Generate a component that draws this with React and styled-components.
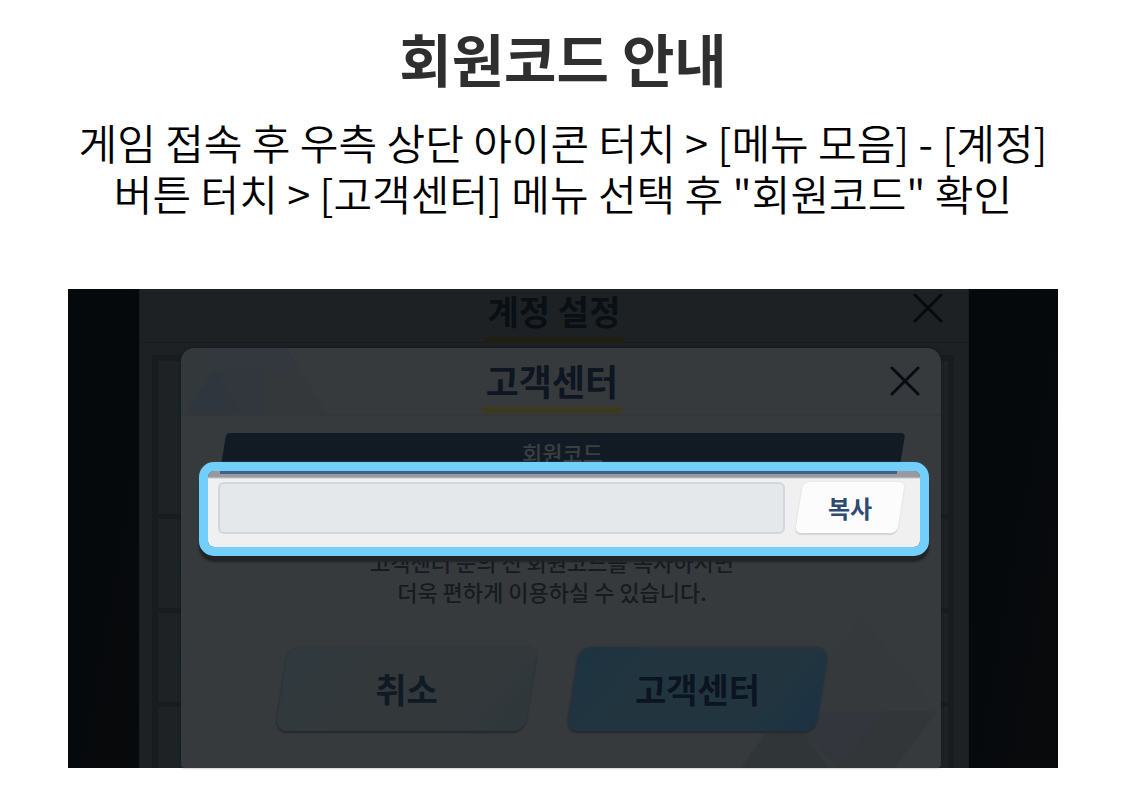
import React from "react";
import styled, { createGlobalStyle } from "styled-components";

const GlobalStyle = createGlobalStyle`
  *, *::before, *::after { box-sizing: border-box; }
  body {
    margin: 0;
    background: #fff;
    color: #000;
    font-family: "Noto Sans CJK KR", "Noto Sans", sans-serif;
  }
  h1, h2, h3, p, figure { margin: 0; }
  button, input { font: inherit; }
`;

const Page = styled.main`
  max-width: 1125px;
  margin: 0 auto;
  padding: 22px 67px 35px 68px;
  text-align: center;
`;

const Title = styled.h1`
  font-size: 57px;
  line-height: 70px;
  font-weight: 700;
  color: #2f2f2f;
`;

const Lead = styled.p`
  margin-top: 24px;
  font-size: 42px;
  line-height: 51px;
  font-weight: 350;
  word-break: keep-all;
`;

const Shot = styled.figure`
  display: grid;
  grid-template-columns: 71px 42px minmax(0, 1fr) 28px 89px;
  margin-top: 71px;
  background: linear-gradient(100deg, #05090c 0%, #07090b 12%, #04080b 50%, #05090c 88%, #090a0c 100%);
`;

const AccountPanel = styled.section`
  grid-area: 1 / 2 / 2 / 5;
  display: flex;
  flex-direction: column;
  min-height: 0;
  background: #1e2124;
  border: solid #191c1f;
  border-width: 0 1px;
`;

const PanelHeader = styled.header`
  position: relative;
  display: grid;
  grid-template-columns: 1fr auto 1fr;
  align-items: end;
  height: ${(p) => (p.$front ? 68 : 54)}px;
  padding: ${(p) => (p.$front ? "0 21px 1px 3px" : "0 25px 0 25px")};
  background: ${(p) => (p.$front ? "transparent" : "#1d2123")};
  border-bottom: ${(p) => (p.$front ? "2px solid #35363a" : "1px solid #1b1b1f")};
`;

const PanelTitle = styled.h2`
  grid-column: 2;
  padding: 0 4px 4px;
  font-size: ${(p) => (p.$front ? 36 : 34)}px;
  line-height: ${(p) => (p.$front ? 46 : 44)}px;
  font-weight: 700;
  color: ${(p) => (p.$front ? "#0e1621" : "#0a0f15")};
  border-bottom: 6px solid ${(p) => (p.$front ? "#3b3a1c" : "#1f1f13")};
`;

const CloseButton = styled.button`
  justify-self: end;
  align-self: ${(p) => (p.$front ? "center" : "start")};
  margin-top: ${(p) => (p.$front ? 0 : 4)}px;
  width: 30px;
  height: 30px;
  padding: 0;
  border: 0;
  background: none;
  color: ${(p) => (p.$front ? "#080c12" : "#07090c")};
  svg { display: block; }
`;

const SettingList = styled.div`
  flex: 1;
  display: flex;
  flex-direction: column;
  gap: 5px;
  margin: 12px 14px 0 12px;
  padding: 6px 6px 0;
  background: #1a1b1f;
`;

const SettingRow = styled.div`
  flex: ${(p) => (p.$tall ? "0 0 153px" : "0 0 89px")};
  padding: 34px 0 0 21px;
  background: #1e2224;
  &::before {
    content: "";
    display: block;
    width: 8px;
    height: 23px;
    background: #12242e;
  }
`;

const AccountBody = styled.div`
  flex: 1 1 0;
  min-height: 0;
  display: flex;
  overflow: hidden;
`;

const Dialog = styled.section`
  grid-area: 1 / 3;
  position: relative;
  margin-top: 59px;
  padding-bottom: 37px;
  border-radius: 14px 14px 4px 4px;
  background: #373a3c;
  box-shadow: 0 -1px 3px #17191b;
  overflow: hidden;
`;

const Facets = styled.svg`
  position: absolute;
  ${(p) => (p.$corner === "top" ? "top: 0; left: 0;" : "right: 0; bottom: 0;")}
`;

const CodeLabel = styled.h3`
  position: relative;
  z-index: 0;
  height: 41px;
  margin: 17px 39px 0 42px;
  font-size: 22px;
  line-height: 38px;
  font-weight: 500;
  color: #3b3f42;
  &::before {
    content: "";
    position: absolute;
    inset: 0;
    z-index: -1;
    border-radius: 4px;
    background: #121a24;
    transform: skewX(-9deg);
  }
`;

const CodeBox = styled.div`
  position: relative;
  display: flex;
  gap: 14px;
  margin: -12px 12px 0 18px;
  padding: 11px 19px 13px 10px;
  border: 9px solid #72cff9;
  border-radius: 15px;
  background:
    linear-gradient(#3f6089, #3f6089) 12px 0 / calc(100% - 35px) 3px no-repeat padding-box,
    linear-gradient(#9a99a1 0 6px, #c9c8cc 7px, #f0f0f0 8px) padding-box;
  box-shadow: 0 6px 2px #202427, 0 0 2px #2a5f7a;
`;

const CodeInput = styled.input`
  flex: 1;
  min-width: 0;
  height: 52px;
  padding: 0 16px;
  border: 2px solid #d3d7dd;
  border-radius: 6px;
  background: #e4e8eb;
  font-size: 22px;
  outline: 0;
`;

const SlantButton = styled.button`
  position: relative;
  z-index: 0;
  padding: 0;
  border: 0;
  background: none;
  font-weight: 700;
  &::before {
    content: "";
    position: absolute;
    inset: 0;
    z-index: -1;
    transform: skewX(-9deg);
  }
`;

const CopyButton = styled(SlantButton)`
  width: 102px;
  height: 51px;
  font-size: 24px;
  line-height: 48px;
  color: #2f4a70;
  &::before {
    border-radius: 6px;
    background: #fcfcfc;
    box-shadow: 0 2px 1px #d4d5d8, 0 0 2px #dcdcdf;
  }
`;

const Notice = styled.p`
  position: relative;
  z-index: -1;
  margin: -10px 18px 0 0;
  font-size: 22px;
  line-height: 30px;
  font-weight: 500;
  color: #171b1f;
`;

const DialogBody = styled.div`
  position: relative;
  z-index: 0;
`;

const Actions = styled.div`
  position: relative;
  display: flex;
  justify-content: center;
  gap: 42px;
  margin: 41px 18px 0 0;
`;

const ActionButton = styled(SlantButton)`
  width: 249px;
  height: 84px;
  font-size: 34px;
  line-height: 82px;
  color: ${(p) => (p.$primary ? "#0b1422" : "#101a24")};
  &::before {
    border-radius: 12px;
    background: ${(p) =>
      p.$primary
        ? "linear-gradient(125deg, #1d3341 0%, #22353f 30%, #22353f 75%, #1b3244 100%)"
        : "linear-gradient(125deg, #2f3a3f 0%, #33383b 35%, #33383b 75%, #2e373c 100%)"};
    box-shadow: 0 2px 2px #23292e, 0 0 2px #2b2f32;
  }
`;

function CloseIcon() {
  return (
    <svg width="30" height="30" viewBox="0 0 30 30" fill="none" stroke="currentColor" strokeWidth="3" strokeLinecap="round" aria-hidden="true">
      <path d="M2 2 28 28M28 2 2 28" />
    </svg>
  );
}

export default function App() {
  return (
    <>
      <GlobalStyle />
      <Page>
        <Title>회원코드 안내</Title>
        <Lead>
          게임 접속 후 우측 상단 아이콘 터치 &gt; [메뉴 모음] - [계정] 버튼 터치 &gt; [고객센터] 메뉴 선택 후 "회원코드" 확인
        </Lead>
        <Shot>
          <AccountPanel>
            <PanelHeader>
              <PanelTitle>계정 설정</PanelTitle>
              <CloseButton type="button" aria-label="계정 설정 닫기"><CloseIcon /></CloseButton>
            </PanelHeader>
            <AccountBody>
              <SettingList>
                <SettingRow $tall />
                <SettingRow />
                <SettingRow />
                <SettingRow />
              </SettingList>
            </AccountBody>
          </AccountPanel>
          <Dialog>
            <Facets $corner="top" width="180" height="67" viewBox="0 0 180 67" aria-hidden="true">
              <path d="M0 0H105L147 67H0Z" fill="#34383b" />
              <path d="M20 0H105L119 22H33Z" fill="#32383d" />
              <path d="M33 22 62 67H4Z" fill="#2f363d" />
              <path d="M33 22H84L84 67H62Z" fill="#32373d" />
              <path d="M0 0H20L33 22 4 67H0Z" fill="#33383a" />
            </Facets>
            <Facets $corner="bottom" width="200" height="150" viewBox="0 0 200 150" aria-hidden="true">
              <path d="M121 0 196 93 154 150H0L60 75Z" fill="#35393c" />
              <path d="M74 93H143L97 150 62 115Z" fill="#33373d" />
              <path d="M143 93H196L153 150H97Z" fill="#323639" />
              <path d="M25 115H62L88 150H0Z" fill="#303537" />
            </Facets>
            <PanelHeader $front>
              <PanelTitle $front>고객센터</PanelTitle>
              <CloseButton $front type="button" aria-label="고객센터 닫기"><CloseIcon /></CloseButton>
            </PanelHeader>
            <DialogBody>
              <CodeLabel id="member-code">회원코드</CodeLabel>
              <CodeBox>
                <CodeInput type="text" readOnly aria-labelledby="member-code" />
                <CopyButton type="button">복사</CopyButton>
              </CodeBox>
              <Notice>
                고객센터 문의 전 회원코드를 복사하시면<br />
                더욱 편하게 이용하실 수 있습니다.
              </Notice>
              <Actions>
                <ActionButton type="button">취소</ActionButton>
                <ActionButton $primary type="button">고객센터</ActionButton>
              </Actions>
            </DialogBody>
          </Dialog>
        </Shot>
      </Page>
    </>
  );
}
